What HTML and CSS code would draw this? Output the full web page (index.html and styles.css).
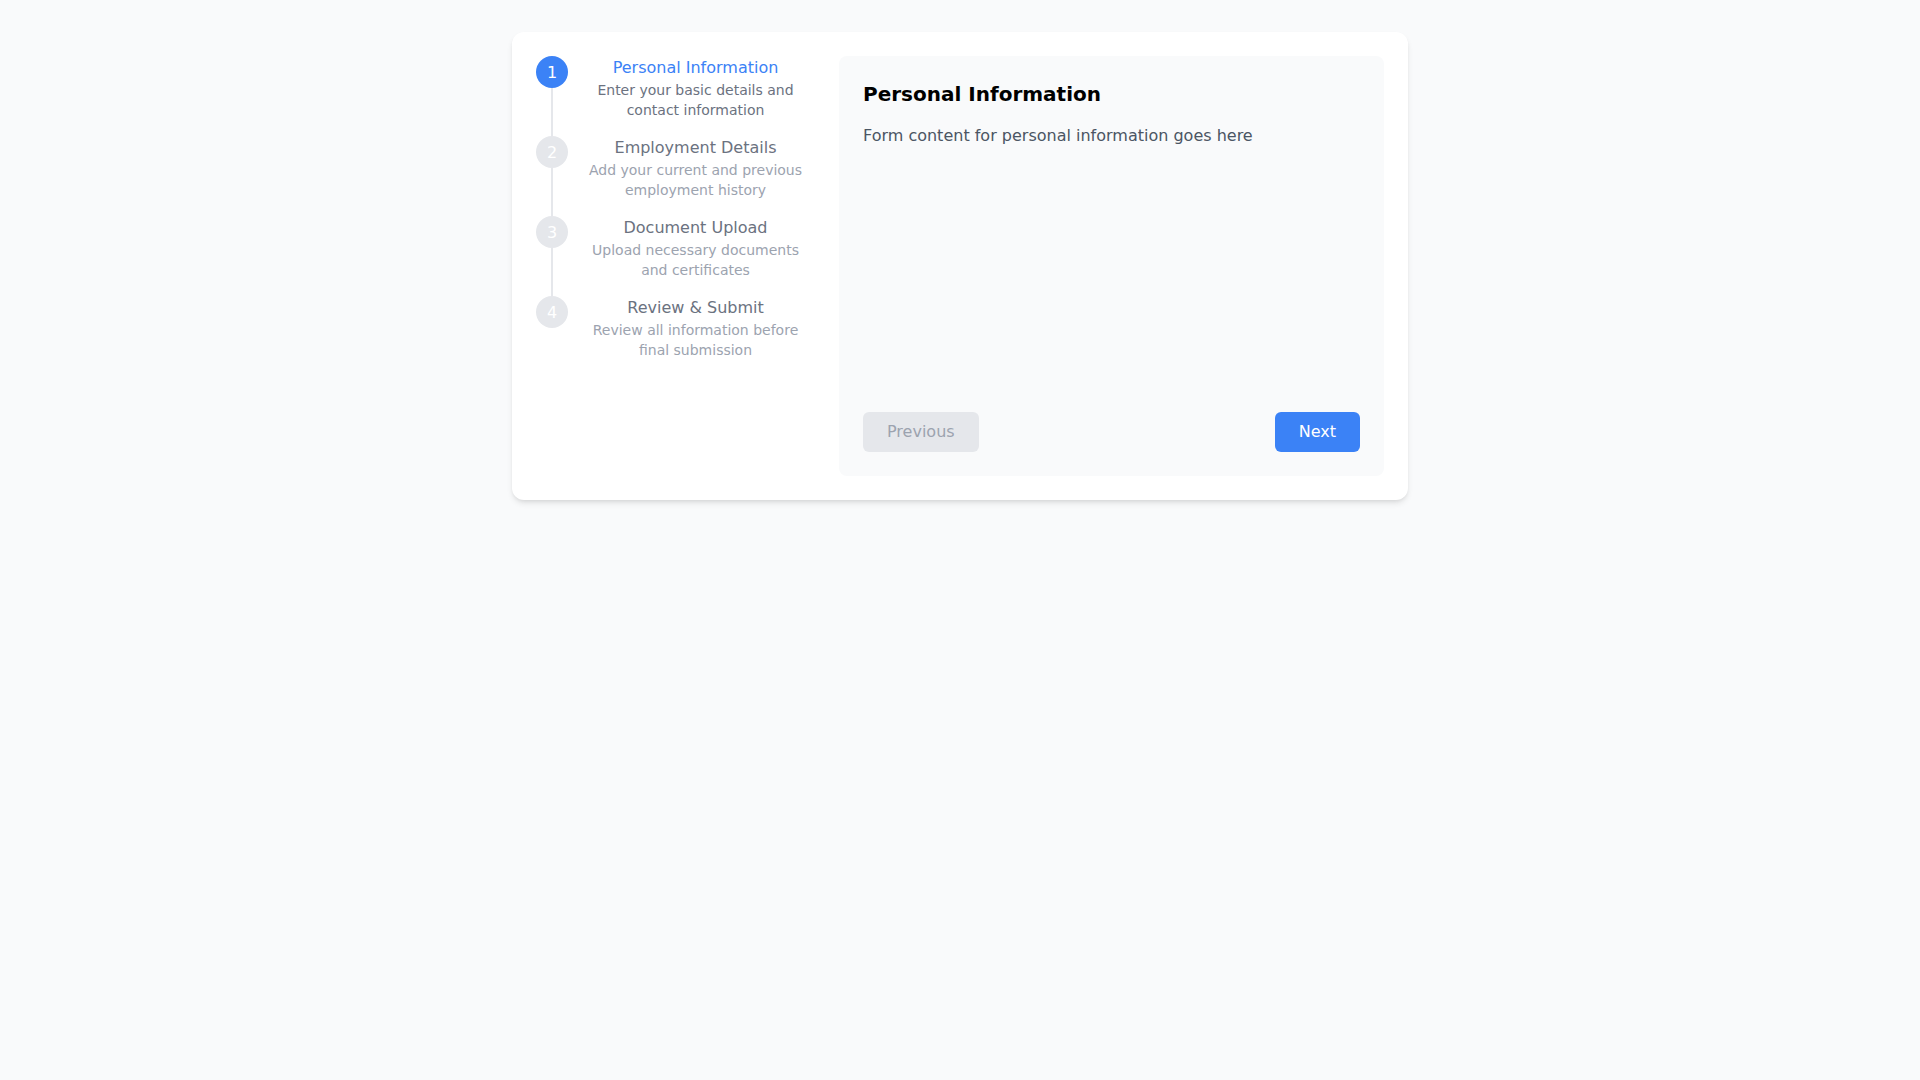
FILE: index.html
```html
<!DOCTYPE html>
<html lang="en">
<head>
    <meta charset="UTF-8">
    <meta name="viewport" content="width=device-width, initial-scale=1.0">
    <title>Application Steps</title>
    <link rel="stylesheet" href="styles.css">
</head>
<body>
    <div class="wizard">
        <!-- step list on the left -->
        <ul class="steps">
            <li class="step active">
                <div class="marker">
                    <span class="circle">1</span>
                    <span class="line"></span>
                </div>
                <div class="step-text">
                    <h3>Personal Information</h3>
                    <p>Enter your basic details and contact information</p>
                </div>
            </li>
            <li class="step">
                <div class="marker">
                    <span class="circle">2</span>
                    <span class="line"></span>
                </div>
                <div class="step-text">
                    <h3>Employment Details</h3>
                    <p>Add your current and previous employment history</p>
                </div>
            </li>
            <li class="step">
                <div class="marker">
                    <span class="circle">3</span>
                    <span class="line"></span>
                </div>
                <div class="step-text">
                    <h3>Document Upload</h3>
                    <p>Upload necessary documents and certificates</p>
                </div>
            </li>
            <li class="step">
                <div class="marker">
                    <span class="circle">4</span>
                </div>
                <div class="step-text">
                    <h3>Review &amp; Submit</h3>
                    <p>Review all information before final submission</p>
                </div>
            </li>
        </ul>

        <div class="panel">
            <h2>Personal Information</h2>
            <p>Form content for personal information goes here</p>
            <div class="actions">
                <button class="btn btn-prev" disabled>Previous</button>
                <button class="btn btn-next">Next</button>
            </div>
        </div>
    </div>
</body>
</html>
```

FILE: styles.css
```css
body {
    margin: 0;
    padding: 32px 0;
    font-family: "DejaVu Sans", sans-serif;
    background-color: #f9fafb;
}
.wizard {
    width: 896px;
    box-sizing: border-box;
    margin: 0 auto;
    padding: 24px;
    display: flex;
    gap: 32px;
    background: white;
    border-radius: 12px;
    box-shadow: 0 4px 6px -1px rgba(0, 0, 0, 0.1), 0 2px 4px -2px rgba(0, 0, 0, 0.1);
}
.steps {
    list-style: none;
    margin: 0;
    padding: 0;
    width: 271px;
    flex-shrink: 0;
}
.step {
    display: flex;
    padding-bottom: 16px;
}
.step:last-child {
    padding-bottom: 0;
}
.marker {
    display: flex;
    flex-direction: column;
    align-items: center;
    width: 32px;
    flex-shrink: 0;
}
.circle {
    width: 32px;
    height: 32px;
    border-radius: 50%;
    background: #e5e7eb;
    color: white;
    font-size: 16px;
    display: flex;
    align-items: center;
    justify-content: center;
}
.line {
    flex: 1;
    width: 2px;
    background: #e5e7eb;
    margin-bottom: -16px; /* reach the next circle */
}
.step.active .circle {
    background: #3b82f6;
}
.step-text {
    margin-left: 16px;
    flex: 1;
    text-align: center;
}
.step-text h3 {
    margin: 0;
    font-size: 16px;
    line-height: 24px;
    font-weight: normal;
    color: #6b7280;
}
.step-text p {
    margin: 0;
    font-size: 14px;
    line-height: 20px;
    color: #9ca3af;
}
.step.active h3 {
    color: #3b82f6;
}
.step.active p {
    color: #6b7280;
}
.panel {
    flex: 1;
    box-sizing: border-box;
    min-height: 420px;
    padding: 24px;
    background: #f9fafb;
    border-radius: 8px;
    display: flex;
    flex-direction: column;
}
.panel h2 {
    margin: 0 0 16px 0;
    font-size: 20px;
    line-height: 28px;
    font-weight: bold;
    color: #000;
}
.panel p {
    margin: 0;
    font-size: 16px;
    line-height: 24px;
    color: #4b5563;
}
.actions {
    margin-top: auto;
    display: flex;
    justify-content: space-between;
}
.btn {
    font-family: inherit;
    font-size: 16px;
    line-height: 24px;
    padding: 8px 24px;
    border: none;
    border-radius: 6px;
    cursor: pointer;
}
.btn-prev {
    background: #e5e7eb;
    color: #9ca3af;
    cursor: not-allowed;
}
.btn-next {
    background: #3b82f6;
    color: white;
}
```
